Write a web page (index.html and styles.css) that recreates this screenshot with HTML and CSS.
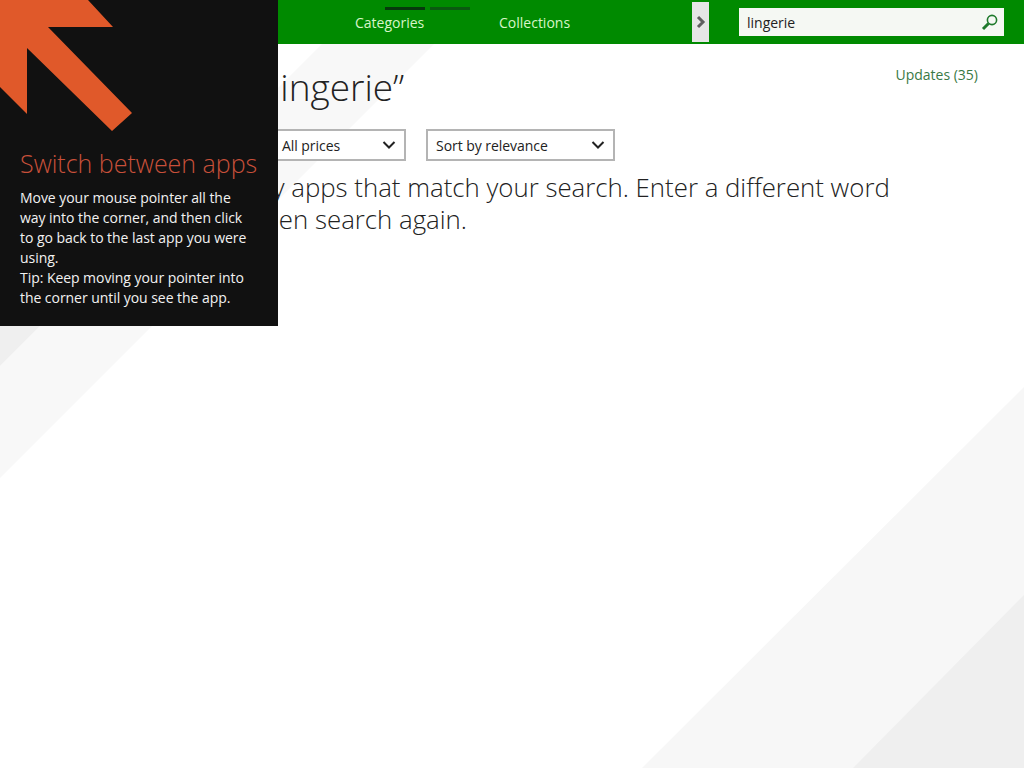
FILE: index.html
```html
<!DOCTYPE html>
<html lang="en">
<head>
  <meta charset="UTF-8" />
  <title>Store</title>
  <link rel="stylesheet" href="styles.css">
</head>
<body>

  <!-- Background stripes -->
  <svg class="stripes" width="1024" height="768" viewBox="0 0 1024 768">
    <polygon points="322,44 434,44 0,478 0,366" fill="#f8f8f8"/>
    <polygon points="0,326 40,326 0,366" fill="#efefef"/>
    <polygon points="1024,387 1024,768 642,768" fill="#f7f7f7"/>
    <polygon points="1024,595 1024,768 853,768" fill="#efefef"/>
  </svg>

  <!-- Top bar -->
  <header class="topbar">
    <nav class="nav">
      <div class="nav-item">
        <div class="nav-marks">
          <span class="mark mark-on"></span>
          <span class="mark"></span>
        </div>
        <span>Categories</span>
      </div>
      <div class="nav-item nav-second">
        <span>Collections</span>
      </div>
    </nav>
    <button class="more">
      <svg width="12" height="14" viewBox="0 0 12 14"><path d="M3 2l5 5-5 5" fill="none" stroke="#5f5f5f" stroke-width="3"/></svg>
    </button>
    <div class="search">
      <span>lingerie</span>
      <svg width="18" height="18" viewBox="0 0 18 18"><circle cx="11" cy="7" r="4.6" fill="none" stroke="#1f7a2c" stroke-width="1.6"/><path d="M7.5 10.5L2 16" fill="none" stroke="#1f7a2c" stroke-width="3"/></svg>
    </div>
  </header>

  <main class="content">
    <div class="title-row">
      <h1 class="title">Results for &ldquo;lingerie&rdquo;</h1>
      <a class="updates">Updates (35)</a>
    </div>
    <div class="filters">
      <div class="select select-price">
        <span>All prices</span>
        <svg width="14" height="10" viewBox="0 0 14 10"><path d="M1.5 2l5.5 5.5L12.5 2" fill="none" stroke="#222" stroke-width="2"/></svg>
      </div>
      <div class="select select-sort">
        <span>Sort by relevance</span>
        <svg width="14" height="10" viewBox="0 0 14 10"><path d="M1.5 2l5.5 5.5L12.5 2" fill="none" stroke="#222" stroke-width="2"/></svg>
      </div>
    </div>
    <p class="message">We didn't find any apps that match your search. Enter a different word or phrase and then search again.</p>
  </main>

  <!-- Tip over the corner -->
  <aside class="tip">
    <svg class="tip-arrow" width="140" height="135" viewBox="0 0 140 135">
      <polygon points="0,0 88,0 113,27 48,27 132,113 112,131 27,48 27,114 0,87" fill="#e0592a"/>
    </svg>
    <h2 class="tip-title">Switch between apps</h2>
    <p class="tip-text">Move your mouse pointer all the way into the corner, and then click to go back to the last app you were using.<br>Tip: Keep moving your pointer into the corner until you see the app.</p>
  </aside>

</body>
</html>
```

FILE: styles.css
```css
* { box-sizing: border-box; }
body {
  margin: 0; width: 1024px; height: 768px; overflow: hidden;
  position: relative; background: #fff; color: #222;
  font-family: "Open Sans", "Noto Sans", sans-serif;
}
.stripes { position: absolute; left: 0; top: 0; }

.topbar {
  position: relative; height: 44px; background: #008a00;
  display: flex; align-items: flex-start;
}
.nav { display: flex; margin-left: 355px; width: 337px; color: #d8f5c8; font-size: 14px; }
.nav-item { width: 144px; padding-top: 7px; position: relative; }
.nav-second { padding-top: 14px; }
.nav-item > span { display: block; line-height: 17px; margin-top: 4px; }
.nav-second > span { margin-top: 0; }
.nav-marks { display: flex; gap: 5px; margin-left: 30px; height: 3px; }
.mark { width: 40px; height: 3px; background: #0a5a10; }
.mark-on { background: #063a0c; }
.more {
  width: 17px; height: 40px; margin-top: 2px; padding: 0; border: none;
  background: #e6e6e6; display: flex; align-items: center; justify-content: center;
}
.search {
  width: 265px; height: 28px; margin: 8px 0 0 30px; padding: 0 5px 0 8px;
  background: #f5f8f3; display: flex; align-items: center; justify-content: space-between;
  font-size: 14px; color: #222;
}

.content { position: relative; padding: 0 46px 0 120px; }
.title-row { display: flex; justify-content: space-between; height: 85px; }
.title { margin: 21px 0 0 -45px; font-size: 37px; font-weight: 300; line-height: 44px; white-space: nowrap; }
.updates { margin-top: 22px; font-size: 14px; line-height: 18px; color: #3a7a45; }
.filters { display: flex; gap: 20px; }
.select {
  height: 32px; border: 2px solid #b4b4b4; background: #fff;
  display: flex; align-items: center; justify-content: space-between;
  padding: 0 8px; font-size: 14px; letter-spacing: -0.05px;
}
.select-price { width: 286px; padding-left: 160px; }
.select-sort { width: 189px; }
.message {
  margin: 10px 0 0 -35px; width: 815px; text-indent: -8px;
  font-size: 25.8px; font-weight: 300; line-height: 32px; color: #222;
}

.tip {
  position: absolute; left: 0; top: 0; width: 278px; height: 326px;
  background: #111; padding: 149px 20px 0; color: #f2f2f2;
}
.tip-arrow { position: absolute; left: 0; top: 0; }
.tip-title { margin: 0; font-size: 25px; font-weight: 300; line-height: 28px; color: #c8503a; white-space: nowrap; }
.tip-text { margin: 11px 0 0; font-size: 14px; line-height: 20px; letter-spacing: -0.05px; }
```
